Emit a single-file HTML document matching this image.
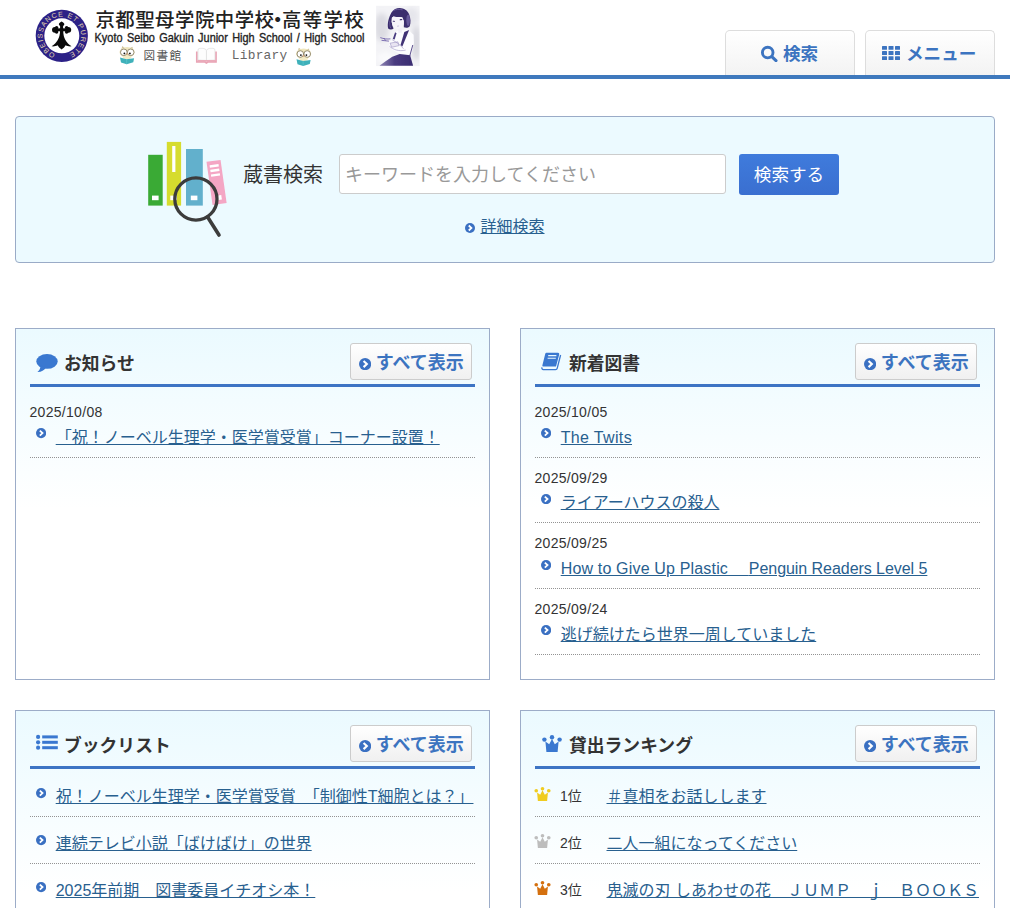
<!DOCTYPE html>
<html lang="ja">
<head>
<meta charset="utf-8">
<title>京都聖母学院中学校・高等学校 図書館</title>
<style>
*{box-sizing:border-box;margin:0;padding:0}
html,body{width:1010px;height:908px;overflow:hidden;background:#fff}
body{font-family:"Liberation Sans","Noto Sans CJK JP",sans-serif;color:#333;font-size:16px;position:relative}
a{color:#28608f;text-decoration:underline}
#hdr{position:absolute;left:0;top:0;width:1010px;height:79px;border-bottom:4px solid #3f79bd}
.tab{position:absolute;top:30px;height:45px;width:130px;border:1px solid #ddd;border-bottom:none;border-radius:5px 5px 0 0;background:linear-gradient(#fff,#f3f3f3);color:#3c74c0;font-weight:bold;font-size:17.6px;line-height:45px;text-align:left}
#sbox{position:absolute;left:15px;top:116px;width:980px;height:147px;border:1px solid #9aabc7;border-radius:4px;background:#ecfaff}
#slabel{position:absolute;left:227px;top:44px;font-size:20px;line-height:28px;color:#333}
#sinput{position:absolute;left:323px;top:37px;width:387px;height:40px;border:1px solid #ccc;border-radius:3px;background:#fff;color:#999;font-size:18px;line-height:41px;padding-left:5px}
#sbtn{position:absolute;left:723px;top:37px;width:100px;height:41px;border-radius:3px;background:linear-gradient(#3f7bdc,#3a6fd0);color:#fff;font-size:17.6px;line-height:41px;padding-top:1.4px;text-align:center}
#sadv{position:absolute;left:464.5px;top:98px;font-size:16px;line-height:24px}
#sadv svg{position:absolute;left:-15.4px;top:8.4px}
.panel{position:absolute;width:475px;border:1px solid #9cacc8;background:linear-gradient(#ebfaff 0,#fff 180px);padding:0 14px}
.ph{position:absolute;left:14px;right:14px;top:0;height:58px;border-bottom:3px solid #3d74c4}
.ph h2{position:absolute;left:34px;top:22.3px;font-size:17.8px;line-height:26px;font-weight:bold;color:#333}
.ph svg{position:absolute}
.all{position:absolute;right:3px;top:14px;width:122px;height:37px;border:1px solid #ccc;border-radius:3px;background:linear-gradient(#fff,#f0f0f0);color:#3c74c0;font-weight:bold;font-size:18px;line-height:35px;padding:1.8px 0 0 24.8px;white-space:nowrap}
.all svg{position:absolute;left:7.6px;top:13.6px}
.list{position:absolute;left:14px;right:14px;top:63.2px}
.list.nd{top:59px}
.it{position:relative;height:65.6px;border-bottom:1px dotted #939393}
.nd .it{height:47px}
.dt{position:absolute;left:-0.5px;top:10px;font-size:14px;line-height:20px;color:#333;letter-spacing:0.3px;white-space:nowrap}
.ln{position:absolute;left:25.7px;top:33.65px;font-size:16px;line-height:24px;white-space:nowrap}
.nd .ln{top:15.1px}
.bul{position:absolute;left:6px;top:36.2px;width:10.2px;height:10.2px}
.nd .bul{top:18.4px}
.rk{position:absolute;left:25px;top:16px;font-size:14px;line-height:20px;color:#333;white-space:nowrap}
.cr{position:absolute;left:-0.7px;top:17px}
.rl .ln{left:71.5px}
</style>
</head>
<body>
<div id="hdr">
<svg id="logo" width="440" height="75" viewBox="0 0 440 75" style="position:absolute;left:0;top:0">
<defs>
<path id="ring" d="M55.23 53.84 A19.2 19.2 0 1 1 68.99 53.6"/>
<filter id="bl" x="-10%" y="-10%" width="120%" height="120%"><feGaussianBlur stdDeviation="0.7"/></filter>
<clipPath id="cpi"><rect x="135" y="70" width="525" height="730"/></clipPath><filter id="bl3" x="-30%" y="-30%" width="160%" height="160%"><feGaussianBlur stdDeviation="35"/></filter><filter id="bl4" x="-10%" y="-10%" width="120%" height="120%"><feGaussianBlur stdDeviation="6"/></filter><filter id="bl2" x="-10%" y="-10%" width="120%" height="120%"><feGaussianBlur stdDeviation="0.35"/></filter>
<linearGradient id="sk" x1="0" y1="0" x2="1" y2="0"><stop offset="0" stop-color="#8f86b4"/><stop offset="0.45" stop-color="#4a3c80"/><stop offset="1" stop-color="#3a2c70"/></linearGradient>
<g id="owl">
<path d="M2.2 4.2 L3.2 0.6 L5.6 2.4 Z M13.8 4.6 L13.4 1.2 L11 2.6 Z" fill="#cfc39a"/>
<ellipse cx="8" cy="6.6" rx="7.6" ry="5.2" fill="#efe6bd"/>
<ellipse cx="8" cy="10.5" rx="4.6" ry="3.6" fill="#f3ebc6"/>
<circle cx="4.7" cy="6.8" r="3.3" fill="#fff" stroke="#7d7456" stroke-width="0.8"/>
<circle cx="11.6" cy="6.8" r="3.3" fill="#fff" stroke="#7d7456" stroke-width="0.8"/>
<circle cx="5.3" cy="7.9" r="0.9" fill="#111"/>
<circle cx="10.8" cy="7.9" r="0.9" fill="#111"/>
<path d="M7.2 8 L8.9 8 L8.1 10 Z" fill="#dfa273"/>
<path d="M0.9 12 L7.5 13.7 L15 12.8 L14.2 16.8 L7.6 18.7 L1.9 17.1 Z" fill="#3fb1ba"/>
<path d="M7.5 13.7 L7.6 18.7" stroke="#63c7cf" stroke-width="0.6"/>
</g>
</defs>
<!-- emblem -->
<circle cx="61.8" cy="35.8" r="26.1" fill="#2c2187"/>
<circle cx="61.8" cy="35.8" r="17.5" fill="#fff"/>
<text font-family="'Liberation Sans',sans-serif" font-size="7" fill="#e2d6ae"><textPath href="#ring" textLength="105.5" lengthAdjust="spacing">OBEISSANCE ET PURETE</textPath></text>
<g fill="#0a0a0a">
<path d="M61.6 21.4 C63.4 22.2 64.6 23.4 64.3 24.6 C64 25.8 63 26.3 61.6 26.6 C60.2 26.3 59.2 25.8 58.9 24.6 C58.6 23.4 59.8 22.2 61.6 21.4 Z"/>
<rect x="60.1" y="24" width="3" height="12"/>
<rect x="54.5" y="28.3" width="14.2" height="3"/>
<circle cx="54.9" cy="29.8" r="2.9"/><circle cx="68.3" cy="29.8" r="2.9"/>
<circle cx="56.6" cy="27.6" r="1.7"/><circle cx="56.6" cy="32" r="1.7"/><circle cx="66.6" cy="27.6" r="1.7"/><circle cx="66.6" cy="32" r="1.7"/>
<path d="M60.1 31 C59.8 38 57 43 51.6 46.3 C54 46.6 56 46.1 57.6 45.2 C58.6 47 60 48.4 61.6 49.4 C63.2 48.4 64.6 47 65.6 45.2 C67.2 46.1 69.2 46.6 71.6 46.3 C66.2 43 63.4 38 63.1 31 Z"/>
</g>
<!-- title -->
<g font-family="'Liberation Sans','Noto Sans CJK JP',sans-serif" font-size="19.4" font-weight="500" fill="#222"><text x="95.4" y="27.4" textLength="178.6" lengthAdjust="spacing">京都聖母学院中学校</text><text x="267.9" y="27" font-weight="bold">・</text><text x="282" y="27.4" textLength="81.6" lengthAdjust="spacing">高等学校</text></g>
<text transform="translate(94.6,41.6) scale(0.917,1)" font-family="'Liberation Sans',sans-serif" font-size="11.9" word-spacing="1.5" fill="#222" stroke="#222" stroke-width="0.35">Kyoto Seibo Gakuin Junior High School / High School</text>
<use href="#owl" x="119.1" y="45.5"/>
<text x="143.6" y="60.4" font-family="'Liberation Mono','Noto Sans CJK JP',monospace" font-size="11.6" fill="#555" textLength="37.5" lengthAdjust="spacing">図書館</text>
<!-- open book -->
<g>
<path d="M196.8 51.4 L196.8 62 L205 62 L206.4 63 L207.8 62 L216 62 L216 51.4" fill="none" stroke="#e9a3b4" stroke-width="1.7"/>
<path d="M198 60 L198 50 Q198 48.3 200 48.3 L203 48.3 Q206 48.6 206.4 50.6 L206.4 60.4 Z" fill="#fdfdfd" stroke="#d8d8d8" stroke-width="0.6"/>
<path d="M214.9 60 L214.9 50 Q214.9 48.3 212.9 48.3 L209.9 48.3 Q206.9 48.6 206.5 50.6 L206.5 60.4 Z" fill="#fdfdfd" stroke="#d8d8d8" stroke-width="0.6"/>
<path d="M197.6 60.9 L215.4 60.9" stroke="#e9a3b4" stroke-width="1.6"/>
</g>
<text x="231.8" y="58.6" font-family="'Liberation Mono',monospace" font-size="12.8" fill="#666" textLength="55.4" lengthAdjust="spacing">Library</text>
<use href="#owl" x="295.6" y="47.2"/>
<!-- illustration -->
<g transform="translate(365,0) scale(0.08264)">
<rect x="135" y="70" width="525" height="730" fill="#f3f3f6"/>
<g clip-path="url(#cpi)"><g filter="url(#bl3)">
<ellipse cx="200" cy="330" rx="90" ry="170" fill="#dcdce2"/>
<ellipse cx="620" cy="520" rx="60" ry="210" fill="#d9d9e0"/>
<ellipse cx="560" cy="200" rx="90" ry="110" fill="#e6e6ec"/>
<ellipse cx="250" cy="700" rx="110" ry="70" fill="#fafafc"/>
</g></g>
<g filter="url(#bl4)">
<path d="M400 370 L520 358 L588 420 L592 520 L560 662 L420 652 L330 600 L285 560 L300 500 L370 470 L352 400 Z" fill="#fcfcfe"/>
<path d="M175 796 L250 742 L330 686 L420 654 L546 668 L582 796 Z" fill="url(#sk)"/>
<path d="M476 386 L534 364 L452 562 L430 546 Z" fill="#3f3174"/>
<path d="M578 545 L540 682" stroke="#4a3c80" stroke-width="11" fill="none"/>
<path d="M364 389 L382 401 L358 479 L336 473 Z" fill="#4a3c80"/>
<path d="M304 522 L398 506 L412 552 L322 572 Z" fill="#e9e5f2" stroke="#8a7fb5" stroke-width="6"/>
<path d="M280 345 C268 290 285 215 318 155 C345 112 385 96 420 97 C470 98 515 125 535 175 C552 220 558 275 540 320 C520 340 490 338 470 330 L470 255 L452 212 C420 196 385 214 345 200 L325 216 L322 262 L332 312 L346 346 C330 362 295 362 280 345 Z" fill="#3b2d6d"/>
<path d="M326 216 L345 201 C385 214 420 197 452 213 L470 256 L470 292 L440 336 L402 356 L360 341 L332 304 L323 262 Z" fill="#f6f4fa"/>
<path d="M400 350 L442 340 L446 392 L404 398 Z" fill="#f1eff6"/>
<ellipse cx="349" cy="257" rx="15" ry="7" fill="#3b2d6d" transform="rotate(8 349 257)"/>
<ellipse cx="436" cy="238" rx="17" ry="7" fill="#3b2d6d" transform="rotate(-10 436 238)"/>
<path d="M388 318 L412 314" stroke="#8d80b6" stroke-width="5"/>
<path d="M340 130 C370 112 420 108 455 120" stroke="#6c5f9e" stroke-width="10" fill="none"/>
<ellipse cx="522" cy="245" rx="22" ry="70" fill="#7467a8" opacity="0.75"/>
<path d="M300 250 C296 290 300 320 312 340" stroke="#6c5f9e" stroke-width="9" fill="none"/>
<path d="M185 455 C225 470 270 476 308 470 M200 488 L290 498 M230 462 L250 492" stroke="#7466ac" stroke-width="11" fill="none"/>
<path d="M296 560 C340 600 410 626 492 606 M330 482 C380 510 430 545 466 590" stroke="#9a90c0" stroke-width="7" fill="none"/>
</g>
</g>
</svg>
<div class="tab" style="left:725px"><svg width="18" height="17" viewBox="0 0 18 17" style="position:absolute;left:34px;top:14.4px"><circle cx="7.7" cy="7.6" r="5.3" fill="none" stroke="#3c74c0" stroke-width="2.9"/><path d="M11.8 11.6 L16 15.6" stroke="#3c74c0" stroke-width="3.1" stroke-linecap="round"/></svg><span style="position:absolute;left:57px;top:1px">検索</span></div>
<div class="tab" style="left:865px"><svg width="18" height="14" viewBox="0 0 18 14" style="position:absolute;left:16px;top:15px" fill="#3c74c0"><rect x="0" y="0" width="5" height="3.8" rx="0.5"/><rect x="6.5" y="0" width="5" height="3.8" rx="0.5"/><rect x="13" y="0" width="5" height="3.8" rx="0.5"/><rect x="0" y="5.1" width="5" height="3.8" rx="0.5"/><rect x="6.5" y="5.1" width="5" height="3.8" rx="0.5"/><rect x="13" y="5.1" width="5" height="3.8" rx="0.5"/><rect x="0" y="10.2" width="5" height="3.8" rx="0.5"/><rect x="6.5" y="10.2" width="5" height="3.8" rx="0.5"/><rect x="13" y="10.2" width="5" height="3.8" rx="0.5"/></svg><span style="position:absolute;left:40px;top:0.7px">メニュー</span></div>
</div>
<div id="sbox">
<svg id="sicon" width="100" height="110" viewBox="130 130 100 110" style="position:absolute;left:114px;top:13px">
<rect x="148.2" y="154.8" width="14.5" height="50.8" fill="#3aaa35"/>
<rect x="152" y="195.6" width="6.6" height="4.6" fill="#fff"/>
<rect x="166.8" y="141.9" width="14.3" height="63.7" fill="#d6dc2e"/>
<rect x="172.2" y="146" width="3.2" height="26" fill="#fff"/>
<rect x="170.3" y="195.6" width="6.6" height="4.6" fill="#fff"/>
<rect x="186" y="149" width="16.8" height="56.6" fill="#62b0cc"/>
<rect x="190.8" y="195.6" width="6.6" height="4.6" fill="#fff"/>
<g transform="rotate(-8 217 182)">
<rect x="209.4" y="160.6" width="14.2" height="43.6" fill="#f4a6c4"/>
<rect x="212" y="164.4" width="9" height="2.4" fill="#fff"/><rect x="212" y="169" width="9" height="2.4" fill="#fff"/><rect x="212" y="173.6" width="9" height="2.4" fill="#fff"/>
<rect x="214.4" y="195.4" width="5" height="4.6" fill="#fff"/>
</g>
<circle cx="195.9" cy="199" r="21.1" fill="none" stroke="#3c3c3c" stroke-width="3.3"/>
<path d="M207.6 217 L219 235" stroke="#3c3c3c" stroke-width="3.6" stroke-linecap="round"/>
</svg>
<div id="slabel">蔵書検索</div>
<div id="sinput">キーワードを入力してください</div>
<div id="sbtn">検索する</div>
<div id="sadv"><svg width="10" height="10" viewBox="0 0 12 12"><circle cx="6" cy="6" r="6" fill="#3a70c2"/><path d="M4.5 3 L7.7 6 L4.5 9" fill="none" stroke="#fff" stroke-width="2.1"/></svg><a>詳細検索</a></div>
</div>

<div class="panel" style="left:15px;top:328px;height:352px">
<div class="ph"><svg width="22" height="19" viewBox="0 0 22 19" style="left:6px;top:25px"><ellipse cx="11" cy="7.4" rx="10.7" ry="7.4" fill="#3a78d0"/><path d="M4.6 11 C4.6 14.5 3.4 16.6 1.4 18 C5 18.2 8 16.8 10 13.6 Z" fill="#3a78d0"/></svg><h2>お知らせ</h2><div class="all"><svg width="12.2" height="12.2" viewBox="0 0 12 12"><circle cx="6" cy="6" r="6" fill="#3a70c2"/><path d="M4.5 3 L7.7 6 L4.5 9" fill="none" stroke="#fff" stroke-width="2.1"/></svg>すべて表示</div></div>
<div class="list">
<div class="it"><div class="dt">2025/10/08</div><svg class="bul" viewBox="0 0 12 12"><circle cx="6" cy="6" r="6" fill="#3a70c2"/><path d="M4.5 3 L7.7 6 L4.5 9" fill="none" stroke="#fff" stroke-width="2.1"/></svg><div class="ln"><a>「祝！ノーベル生理学・医学賞受賞」コーナー設置！</a></div></div>
</div>
</div>

<div class="panel" style="left:520px;top:328px;height:352px">
<div class="ph"><svg width="21" height="19" viewBox="0 0 21 19" style="left:6.3px;top:22.6px"><path d="M5.4 0.8 L17 0.8 Q18.6 0.8 18.2 2.4 L15 14.6 L2.2 14.6 Q1 14.6 1.4 13.2 L4.2 2 Q4.5 0.8 5.4 0.8 Z" fill="#3a78d0"/><path d="M7.2 3.6 L15.4 3.6 M6.6 6.2 L14.8 6.2" stroke="#e9f8ff" stroke-width="1.1"/><path d="M19.6 3 L16.2 16.4 Q15.9 17.6 14.6 17.6 L2.4 17.6 Q0.6 17.4 0.9 15.4" fill="none" stroke="#3a78d0" stroke-width="1.3"/></svg><h2>新着図書</h2><div class="all"><svg width="12.2" height="12.2" viewBox="0 0 12 12"><circle cx="6" cy="6" r="6" fill="#3a70c2"/><path d="M4.5 3 L7.7 6 L4.5 9" fill="none" stroke="#fff" stroke-width="2.1"/></svg>すべて表示</div></div>
<div class="list">
<div class="it"><div class="dt">2025/10/05</div><svg class="bul" viewBox="0 0 12 12"><circle cx="6" cy="6" r="6" fill="#3a70c2"/><path d="M4.5 3 L7.7 6 L4.5 9" fill="none" stroke="#fff" stroke-width="2.1"/></svg><div class="ln"><a style="letter-spacing:0.35px">The Twits</a></div></div>
<div class="it"><div class="dt">2025/09/29</div><svg class="bul" viewBox="0 0 12 12"><circle cx="6" cy="6" r="6" fill="#3a70c2"/><path d="M4.5 3 L7.7 6 L4.5 9" fill="none" stroke="#fff" stroke-width="2.1"/></svg><div class="ln"><a>ライアーハウスの殺人</a></div></div>
<div class="it"><div class="dt">2025/09/25</div><svg class="bul" viewBox="0 0 12 12"><circle cx="6" cy="6" r="6" fill="#3a70c2"/><path d="M4.5 3 L7.7 6 L4.5 9" fill="none" stroke="#fff" stroke-width="2.1"/></svg><div class="ln"><a><span style="letter-spacing:0.17px">How to Give Up Plastic 　</span><span style="letter-spacing:-0.05px">Penguin Readers Level 5</span></a></div></div>
<div class="it"><div class="dt">2025/09/24</div><svg class="bul" viewBox="0 0 12 12"><circle cx="6" cy="6" r="6" fill="#3a70c2"/><path d="M4.5 3 L7.7 6 L4.5 9" fill="none" stroke="#fff" stroke-width="2.1"/></svg><div class="ln"><a>逃げ続けたら世界一周していました</a></div></div>
</div>
</div>

<div class="panel" style="left:15px;top:710px;height:548px">
<div class="ph"><svg width="22" height="17" viewBox="0 0 22 17" style="left:6px;top:23px" fill="#3a78d0"><circle cx="2.1" cy="2.9" r="2.1"/><circle cx="2.1" cy="8.3" r="2.1"/><circle cx="2.1" cy="13.7" r="2.1"/><rect x="6.2" y="1.4" width="15.6" height="3"/><rect x="6.2" y="6.8" width="15.6" height="3"/><rect x="6.2" y="12.2" width="15.6" height="3"/></svg><h2>ブックリスト</h2><div class="all"><svg width="12.2" height="12.2" viewBox="0 0 12 12"><circle cx="6" cy="6" r="6" fill="#3a70c2"/><path d="M4.5 3 L7.7 6 L4.5 9" fill="none" stroke="#fff" stroke-width="2.1"/></svg>すべて表示</div></div>
<div class="list nd">
<div class="it"><svg class="bul" viewBox="0 0 12 12"><circle cx="6" cy="6" r="6" fill="#3a70c2"/><path d="M4.5 3 L7.7 6 L4.5 9" fill="none" stroke="#fff" stroke-width="2.1"/></svg><div class="ln"><a>祝！ノーベル生理学・医学賞受賞　「制御性T細胞とは？」</a></div></div>
<div class="it"><svg class="bul" viewBox="0 0 12 12"><circle cx="6" cy="6" r="6" fill="#3a70c2"/><path d="M4.5 3 L7.7 6 L4.5 9" fill="none" stroke="#fff" stroke-width="2.1"/></svg><div class="ln"><a>連続テレビ小説「ばけばけ」の世界</a></div></div>
<div class="it"><svg class="bul" viewBox="0 0 12 12"><circle cx="6" cy="6" r="6" fill="#3a70c2"/><path d="M4.5 3 L7.7 6 L4.5 9" fill="none" stroke="#fff" stroke-width="2.1"/></svg><div class="ln"><a>2025年前期　図書委員イチオシ本！</a></div></div>
</div>
</div>

<div class="panel" style="left:520px;top:710px;height:548px">
<div class="ph"><svg width="20" height="17" viewBox="0 0 19.6 17" style="left:6.5px;top:23.9px" fill="#3a78d0"><circle cx="2.2" cy="4.6" r="2.2"/><circle cx="9.8" cy="2.2" r="2.2"/><circle cx="17.4" cy="4.6" r="2.2"/><path d="M3.2 6.6 L7 9.3 L9.8 4 L12.6 9.3 L16.4 6.6 L15.4 17 L4.2 17 Z"/></svg><h2>貸出ランキング</h2><div class="all"><svg width="12.2" height="12.2" viewBox="0 0 12 12"><circle cx="6" cy="6" r="6" fill="#3a70c2"/><path d="M4.5 3 L7.7 6 L4.5 9" fill="none" stroke="#fff" stroke-width="2.1"/></svg>すべて表示</div></div>
<div class="list nd rl">
<div class="it"><svg class="cr" width="17" height="14" viewBox="0 0 19.6 17" fill="#f0cc20"><circle cx="2.2" cy="4.6" r="2.2"/><circle cx="9.8" cy="2.2" r="2.2"/><circle cx="17.4" cy="4.6" r="2.2"/><path d="M3.2 6.6 L7 9.3 L9.8 4 L12.6 9.3 L16.4 6.6 L15.4 17 L4.2 17 Z"/></svg><div class="rk">1位</div><div class="ln"><a>＃真相をお話しします</a></div></div>
<div class="it"><svg class="cr" width="17" height="14" viewBox="0 0 19.6 17" fill="#bdbdbd"><circle cx="2.2" cy="4.6" r="2.2"/><circle cx="9.8" cy="2.2" r="2.2"/><circle cx="17.4" cy="4.6" r="2.2"/><path d="M3.2 6.6 L7 9.3 L9.8 4 L12.6 9.3 L16.4 6.6 L15.4 17 L4.2 17 Z"/></svg><div class="rk">2位</div><div class="ln"><a>二人一組になってください</a></div></div>
<div class="it"><svg class="cr" width="17" height="14" viewBox="0 0 19.6 17" fill="#d4700f"><circle cx="2.2" cy="4.6" r="2.2"/><circle cx="9.8" cy="2.2" r="2.2"/><circle cx="17.4" cy="4.6" r="2.2"/><path d="M3.2 6.6 L7 9.3 L9.8 4 L12.6 9.3 L16.4 6.6 L15.4 17 L4.2 17 Z"/></svg><div class="rk">3位</div><div class="ln"><a>鬼滅の刃 しあわせの花　ＪＵＭＰ　ｊ　ＢＯＯＫＳ</a></div></div>
</div>
</div>
</body>
</html>
